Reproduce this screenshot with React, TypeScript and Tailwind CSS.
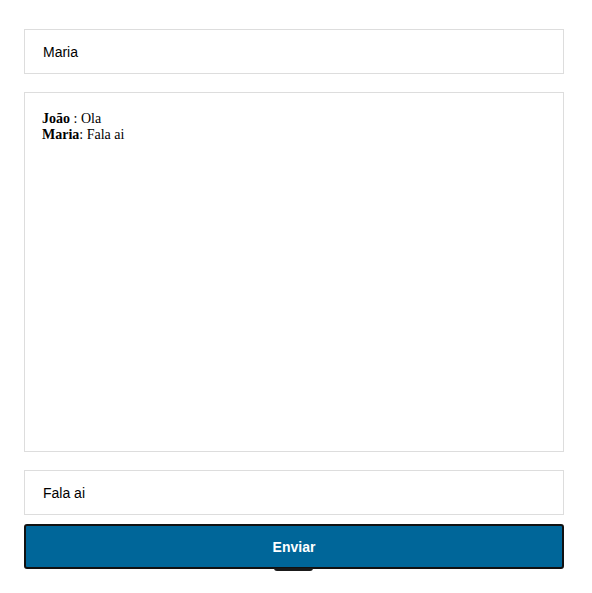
import React, { useState } from 'react';

const messages = [
  { author: 'João', sep: ' : ', text: 'Ola' },
  { author: 'Maria', sep: ': ', text: 'Fala ai' }
];

const App = () => {
  const [name, setName] = useState('Maria');
  const [msg, setMsg] = useState('Fala ai');

  return (
    <div className="min-h-[593px] w-[592px] bg-white pl-6 pt-[29px]">
      <div className="flex w-[540px] flex-col">
        <input
          value={name}
          onChange={(e) => setName(e.target.value)}
          className="h-[45px] w-full border border-[#dddddd] px-[18px] font-['Liberation_Sans',Arial,sans-serif] text-sm text-black outline-none"
        />
        <div className="mt-[18px] h-[360px] w-full border border-[#dddddd] px-[17px] py-[18px] font-['Liberation_Serif','Times_New_Roman',serif] text-sm leading-4 text-black">
          {messages.map((m, i) => (
            <div key={'msg-' + i}>
              <b>{m.author}</b>
              {m.sep}
              {m.text}
            </div>
          ))}
        </div>
        <input
          value={msg}
          onChange={(e) => setMsg(e.target.value)}
          className="mt-[18px] h-[45px] w-full border border-[#dddddd] px-[18px] font-['Liberation_Sans',Arial,sans-serif] text-sm text-black outline-none"
        />
        <div className="relative mt-[9px]">
          <button className="h-[45px] w-full rounded-[3px] border-2 border-[#111111] bg-[#006699] font-['Liberation_Sans',Arial,sans-serif] text-sm font-bold text-white">
            Enviar
          </button>
          <div className="absolute left-[250px] top-[44px] h-[3px] w-[39px] rounded-b-[3px] bg-[#1a1a1a]" />
        </div>
      </div>
    </div>
  );
};

export default App;
